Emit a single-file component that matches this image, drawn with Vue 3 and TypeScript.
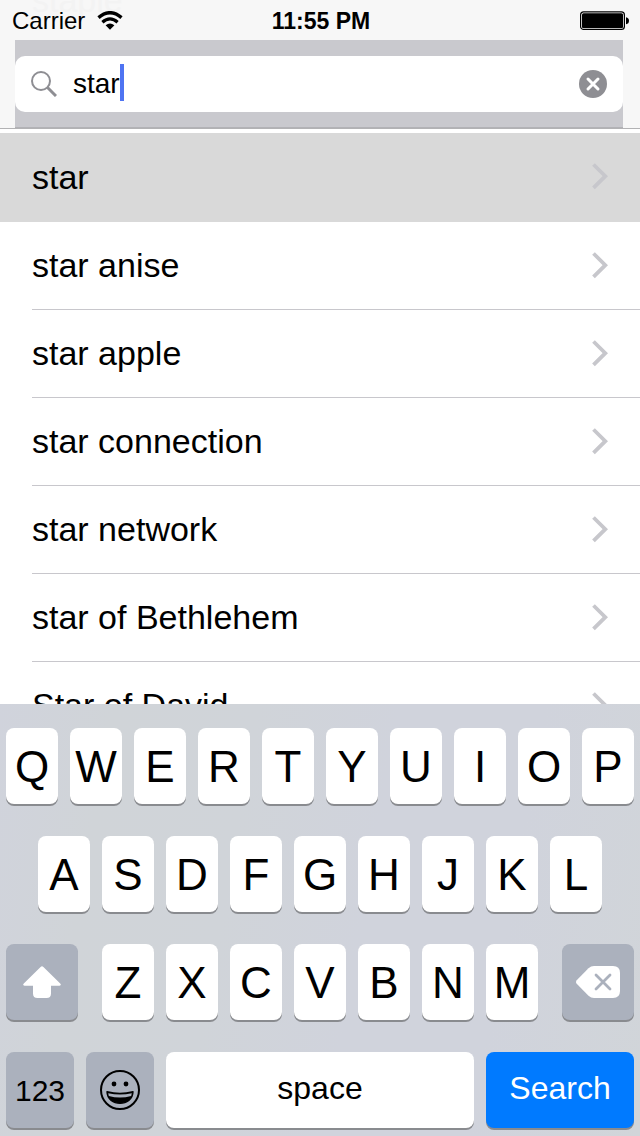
<script setup lang="ts">
import { ref } from 'vue'

interface Entry {
  id: number
  text: string
}

const query = ref('star')
const selected = ref(0)

const entries: Entry[] = [
  'star',
  'star anise',
  'star apple',
  'star connection',
  'star network',
  'star of Bethlehem',
  'Star of David',
].map((text, id) => ({ id, text }))

const topRow = 'QWERTYUIOP'.split('')
const middleRow = 'ASDFGHJKL'.split('')
const bottomRow = 'ZXCVBNM'.split('')

function type(letter: string) {
  query.value += letter.toLowerCase()
}

function erase() {
  query.value = query.value.slice(0, -1)
}
</script>

<template>
  <div class="screen">
    <header class="header">
      <span class="ghost" aria-hidden="true">staple</span>
      <div class="status">
        <div class="carrier">
          <span>Carrier</span>
          <svg class="wifi" viewBox="0 0 26 20" aria-hidden="true">
            <path d="M1.5 6.600Q13-3.200 24.5 6.600" fill="none" stroke="#000" stroke-width="3.400" />
            <path d="M5.400 11.200Q13 4.600 20.600 11.200" fill="none" stroke="#000" stroke-width="3.200" />
            <path d="M8.600 14.200Q13 10.600 17.400 14.200L13 18.800Z" fill="#000" />
          </svg>
        </div>
        <time class="clock">11:55 PM</time>
        <div class="power">
          <svg class="battery" viewBox="0 0 50 20" aria-hidden="true">
            <rect x="0.600" y="0.900" width="43.800" height="17.600" rx="3" fill="none" stroke="#000" stroke-width="1.200" />
            <rect x="2" y="2.200" width="41" height="15" rx="1.500" fill="#000" />
            <path d="M46 6.200Q49 6.700 49 9.700T46 13.200Z" fill="#000" />
          </svg>
        </div>
      </div>
      <form class="search-area" @submit.prevent>
        <div class="field">
          <svg class="lens" viewBox="0 0 26 26" aria-hidden="true">
            <circle cx="10" cy="10" r="9" fill="none" stroke="#8e8e93" stroke-width="2" />
            <path d="M16.500 16.500L25 25" stroke="#8e8e93" stroke-width="3" />
          </svg>
          <div class="entry">
            <input v-model="query" class="input" type="text" aria-label="Search" autocomplete="off" spellcheck="false" />
            <span class="caret"></span>
          </div>
          <button class="clear" type="button" aria-label="Clear text" @click="query = ''">
            <svg viewBox="0 0 28 28" aria-hidden="true">
              <circle cx="14" cy="14" r="14" fill="#8e8e93" />
              <path d="M9 9L19 19M19 9L9 19" stroke="#fff" stroke-width="3" stroke-linecap="round" />
            </svg>
          </button>
        </div>
      </form>
    </header>

    <main class="results">
      <ul class="list">
        <li v-for="entry in entries" :key="entry.id" class="item">
          <button class="row" :class="{ active: entry.id === selected }" type="button" @click="selected = entry.id">
            <span class="label">
              {{ entry.text }}
              <svg class="chevron" viewBox="0 0 16 28" aria-hidden="true">
                <path d="M1.500 1.500L13.300 13.200L1.500 24.900" fill="none" stroke="#c7c7cc" stroke-width="3.800" />
              </svg>
            </span>
          </button>
        </li>
      </ul>
    </main>

    <section class="keyboard" aria-label="Keyboard">
      <div class="keys">
        <button v-for="k in topRow" :key="k" class="key" type="button" @click="type(k)">{{ k }}</button>
      </div>
      <div class="keys inset">
        <button v-for="k in middleRow" :key="k" class="key" type="button" @click="type(k)">{{ k }}</button>
      </div>
      <div class="keys spread">
        <button class="key dark wide" type="button" aria-label="Shift">
          <svg class="shift" viewBox="0 0 38 32" aria-hidden="true">
            <path d="M17.600 1Q19 -0.300 20.400 1L37.200 17.500Q38.800 19.500 36.500 19.800H28V27.500Q28 32 23.500 32H14.500Q10 32 10 27.500V19.800H1.500Q-0.800 19.500 0.800 17.500Z" fill="#fff" />
          </svg>
        </button>
        <div class="keys letters">
          <button v-for="k in bottomRow" :key="k" class="key" type="button" @click="type(k)">{{ k }}</button>
        </div>
        <button class="key dark wide" type="button" aria-label="Delete" @click="erase">
          <svg class="erase" viewBox="0 0 44 32" aria-hidden="true">
            <path d="M0.700 14.200L12.500 2.200Q15 0 18 0H37Q44 0 44 7V25Q44 32 37 32H18Q15 32 12.500 29.800L0.700 17.800Q-0.700 16 0.700 14.200Z" fill="#fff" />
            <path d="M20 9L34 23M34 9L20 23" stroke="#abb1bd" stroke-width="2.800" stroke-linecap="round" />
          </svg>
        </button>
      </div>
      <div class="keys">
        <button class="key dark medium numbers" type="button">123</button>
        <button class="key dark medium" type="button" aria-label="Emoji">
          <svg class="emoji" viewBox="0 0 40 40" aria-hidden="true">
            <circle cx="20" cy="20" r="19" fill="none" stroke="#000" stroke-width="2" />
            <circle cx="14" cy="14" r="2.400" fill="#000" />
            <circle cx="26" cy="14" r="2.400" fill="#000" />
            <path d="M7 21.800Q20 25.200 33 21.800C32.600 37.200 7.400 37.200 7 21.800Z" fill="#000" stroke="#000" stroke-width="1.400" stroke-linejoin="round" />
            <path d="M8.200 23.200Q20 26 31.800 23.200L31.200 26Q20 29 8.800 26Z" fill="#abb1bd" />
          </svg>
        </button>
        <button class="key word space" type="button" @click="query += ' '">space</button>
        <button class="key word go" type="button">Search</button>
      </div>
    </section>
  </div>
</template>

<style>
body {
  margin: 0;
}
</style>

<style scoped>
.screen {
  display: flex;
  flex-direction: column;
  height: 100vh;
  overflow: hidden;
  background: #fff;
  color: #000;
  font-family: "Liberation Sans", Arial, sans-serif;
}

button,
input {
  margin: 0;
  padding: 0;
  border: 0;
  background: none;
  color: inherit;
  font: inherit;
}

svg {
  display: block;
}

.header {
  position: relative;
  flex: none;
  overflow: hidden;
  background: #f7f7f7;
  border-bottom: 1px solid #b2b2b4;
}

.ghost {
  position: absolute;
  top: -20px;
  left: 32px;
  color: #f3f3f3;
  font-size: 34px;
  line-height: 40px;
}

.status {
  position: relative;
  display: grid;
  grid-template-columns: 1fr auto 1fr;
  align-items: center;
  height: 38px;
  padding: 2px 10px 0 12px;
}

.carrier {
  display: flex;
  align-items: center;
  gap: 12px;
  font-size: 24px;
  line-height: 38px;
}

.wifi {
  width: 26px;
  height: 20px;
}

.clock {
  font-size: 23px;
  font-weight: 700;
  line-height: 38px;
}

.power {
  display: flex;
  justify-content: flex-end;
}

.battery {
  width: 50px;
  height: 20px;
}

.search-area {
  position: relative;
  margin: 0 17px 0 15px;
  padding: 16px 0 15px;
  background: #c9c9ce;
  border-bottom: 1px solid #b2b2b6;
}

.field {
  display: flex;
  align-items: center;
  height: 56px;
  padding: 0 16px;
  border-radius: 10px;
  background: #fff;
}

.lens {
  flex: none;
  width: 26px;
  height: 26px;
  margin-right: 16px;
}

.entry {
  position: relative;
  display: flex;
  flex: 1;
}

.input {
  flex: 1;
  min-width: 0;
  height: 40px;
  outline: none;
  font-size: 28px;
  caret-color: #4f74f2;
}

.caret {
  position: absolute;
  top: 0;
  left: 47px;
  width: 4px;
  height: 37px;
  background: #4f74f2;
}

.clear {
  width: 28px;
  height: 28px;
}

.results {
  flex: 1;
  min-height: 0;
  overflow: hidden;
}

.list {
  margin: 0;
  padding: 4px 0 0;
  list-style: none;
}

.row {
  display: block;
  width: 100%;
  padding-left: 32px;
  text-align: left;
}

.label {
  display: flex;
  align-items: center;
  justify-content: space-between;
  height: 87px;
  padding-right: 32px;
  border-bottom: 1px solid #c8c7cc;
  font-size: 34px;
}

.row.active {
  background: #d9d9d9;
}

.row.active .label {
  height: 88px;
  border-color: transparent;
}

.chevron {
  width: 16px;
  height: 28px;
}

.keyboard {
  display: flex;
  flex: none;
  flex-direction: column;
  gap: 32px;
  padding: 24px 6px 8px;
  background: linear-gradient(100deg, #d0d3dc 0%, #d0d4d8 16%, #d0d4d9 36%, #d0d3dc 56%, #d0d3dc 76%, #d1d5d9 100%);
}

.keys {
  display: flex;
  gap: 12px;
}

.inset {
  padding: 0 32px;
}

.spread {
  gap: 24px;
}

.letters {
  flex: 1;
}

.key {
  display: flex;
  box-sizing: border-box;
  flex: 1 1 0;
  align-items: center;
  justify-content: center;
  min-width: 0;
  height: 76px;
  padding-top: 2px;
  border-radius: 8px;
  background: #fff;
  box-shadow: 0 2px 0 #898b8f;
  font-size: 44px;
}

.dark {
  padding-top: 0;
  background: #abb1bd;
}

.wide {
  flex: 0 0 72px;
}

.medium {
  flex: 0 0 68px;
}

.numbers {
  padding-top: 2px;
  font-size: 30px;
}

.word {
  padding: 0 0 4px;
  font-size: 32px;
}

.go {
  flex: 0 0 148px;
  background: #007aff;
  color: #fff;
}

.shift {
  width: 38px;
  height: 32px;
}

.erase {
  width: 44px;
  height: 32px;
}

.emoji {
  width: 40px;
  height: 40px;
}
</style>
